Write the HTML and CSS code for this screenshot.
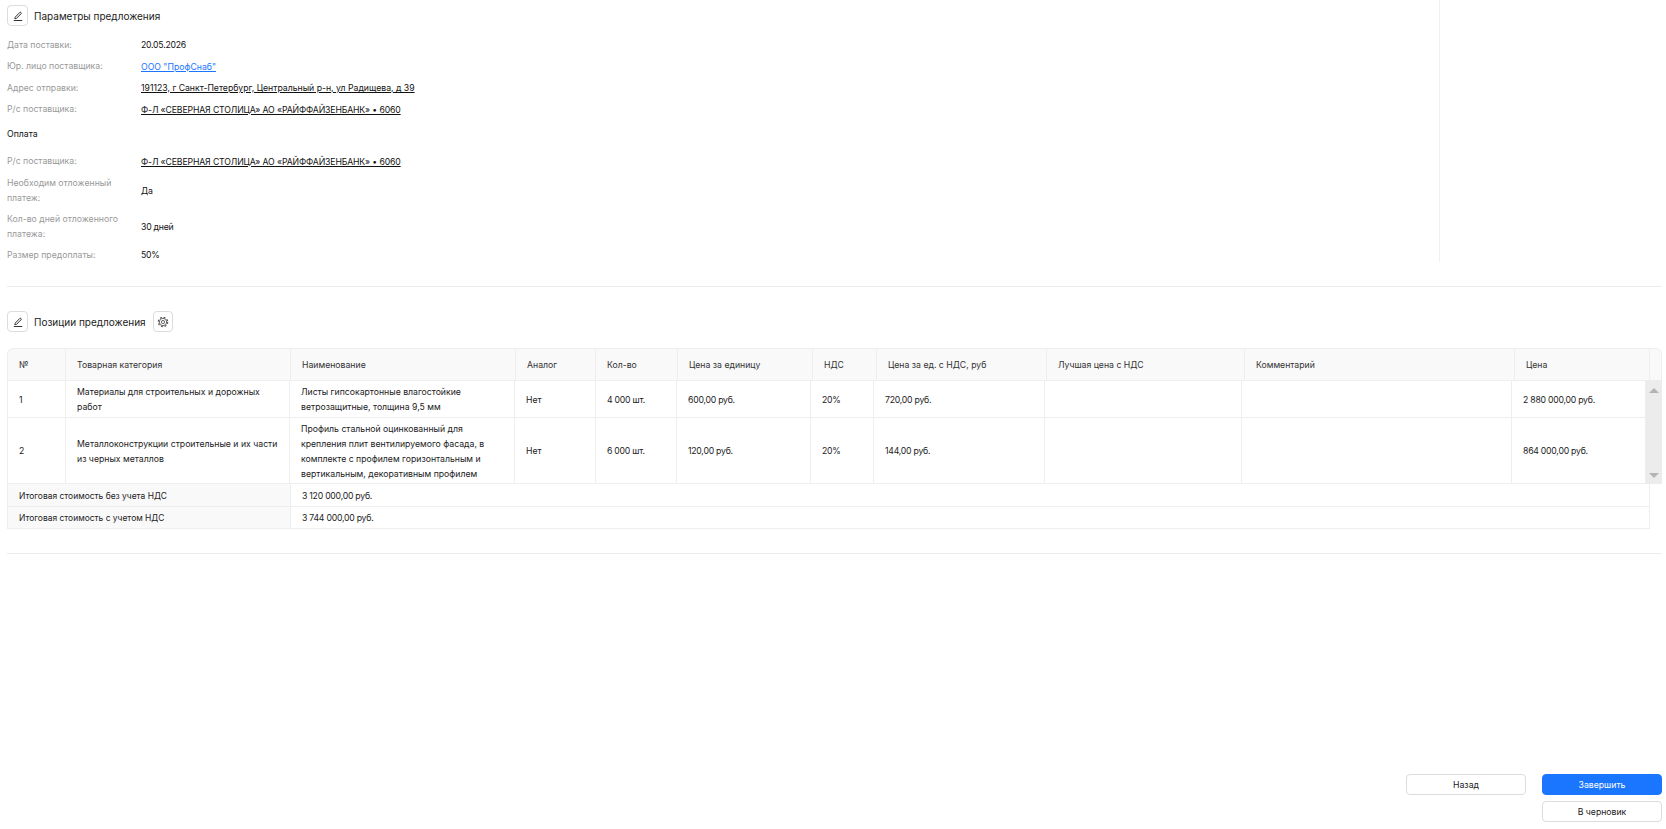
FILE: index.html
```html
<!DOCTYPE html>
<html lang="ru">
<head>
<meta charset="utf-8">
<title>Параметры предложения</title>
<link rel="stylesheet" href="styles.css">
</head>
<body>
<main class="page">
  <section class="params">
    <div class="params-main">
      <header class="section-head">
        <button class="icon-btn" type="button" aria-label="Редактировать">
          <svg class="icon" viewBox="0 0 12 12"><path d="M3.2 7.2 7.7 2.5c.4-.4.9-.4 1.3 0 .4.4.4.9 0 1.3L4.5 8.4l-1.7.3z" /><path d="M1.8 10.5h8.4" /></svg>
        </button>
        <h2 class="section-title">Параметры предложения</h2>
      </header>
      <dl class="fields fields-first">
        <div class="field"><dt>Дата поставки:</dt><dd class="num">20.05.2026</dd></div>
        <div class="field"><dt>Юр. лицо поставщика:</dt><dd><a class="link" href="#">ООО "ПрофСнаб"</a></dd></div>
        <div class="field"><dt>Адрес отправки:</dt><dd><span class="under">191123, г Санкт-Петербург, Центральный р-н, ул Радищева, д 39</span></dd></div>
        <div class="field"><dt>Р/с поставщика:</dt><dd><span class="under caps">Ф-Л «СЕВЕРНАЯ СТОЛИЦА» АО «РАЙФФАЙЗЕНБАНК» • 6060</span></dd></div>
      </dl>
      <h3 class="sub-title">Оплата</h3>
      <dl class="fields">
        <div class="field"><dt>Р/с поставщика:</dt><dd><span class="under caps">Ф-Л «СЕВЕРНАЯ СТОЛИЦА» АО «РАЙФФАЙЗЕНБАНК» • 6060</span></dd></div>
        <div class="field"><dt>Необходим отложенный платеж:</dt><dd>Да</dd></div>
        <div class="field"><dt>Кол-во дней отложенного платежа:</dt><dd class="num">30 дней</dd></div>
        <div class="field"><dt>Размер предоплаты:</dt><dd class="num">50%</dd></div>
      </dl>
    </div>
    <aside class="params-side"></aside>
  </section>

  <hr class="divider">

  <section class="positions">
    <header class="section-head">
      <button class="icon-btn" type="button" aria-label="Редактировать">
        <svg class="icon" viewBox="0 0 12 12"><path d="M3.2 7.2 7.7 2.5c.4-.4.9-.4 1.3 0 .4.4.4.9 0 1.3L4.5 8.4l-1.7.3z" /><path d="M1.8 10.5h8.4" /></svg>
      </button>
      <h2 class="section-title">Позиции предложения</h2>
      <button class="icon-btn icon-btn-narrow" type="button" aria-label="Настройки">
        <svg class="icon" viewBox="0 0 12 12"><circle class="gear-teeth" cx="6" cy="6" r="4.7" /><circle class="gear-ring" cx="6" cy="6" r="3.7" /><circle class="gear-ring" cx="6" cy="6" r="1.6" /></svg>
      </button>
    </header>

    <div class="grid">
      <table class="grid-head">
        <colgroup>
          <col class="h1"><col class="h2"><col class="h3"><col class="h4"><col class="h5"><col class="h6"><col class="h7"><col class="h8"><col class="h9"><col class="h10"><col class="h11"><col class="h12">
        </colgroup>
        <tr>
          <th>№</th><th>Товарная категория</th><th>Наименование</th><th>Аналог</th><th>Кол-во</th><th>Цена за единицу</th><th>НДС</th><th>Цена за ед. с НДС, руб</th><th>Лучшая цена с НДС</th><th>Комментарий</th><th>Цена</th><th></th>
        </tr>
      </table>
      <div class="grid-scroll">
        <table class="grid-body">
          <colgroup>
            <col class="b1"><col class="b2"><col class="b3"><col class="b4"><col class="b5"><col class="b6"><col class="b7"><col class="b8"><col class="b9"><col class="b10"><col class="b11">
          </colgroup>
          <tr class="row-short">
            <td>1</td><td>Материалы для строительных и дорожных работ</td><td>Листы гипсокартонные влагостойкие ветрозащитные, толщина 9,5 мм</td><td>Нет</td><td class="num">4 000 шт.</td><td class="num">600,00 руб.</td><td class="num">20%</td><td class="num">720,00 руб.</td><td></td><td></td><td class="num">2 880 000,00 руб.</td>
          </tr>
          <tr class="row-tall">
            <td>2</td><td>Металлоконструкции строительные и их части из черных металлов</td><td>Профиль стальной оцинкованный для крепления плит вентилируемого фасада, в комплекте с профилем горизонтальным и вертикальным, декоративным профилем</td><td>Нет</td><td class="num">6 000 шт.</td><td class="num">120,00 руб.</td><td class="num">20%</td><td class="num">144,00 руб.</td><td></td><td></td><td class="num">864 000,00 руб.</td>
          </tr>
        </table>
        <div class="scrollbar" aria-hidden="true">
          <span class="arrow arrow-up"></span>
          <span class="arrow arrow-down"></span>
        </div>
      </div>
      <table class="grid-totals">
        <colgroup><col class="t1"><col class="t2"></colgroup>
        <tr class="total-first"><th>Итоговая стоимость без учета НДС</th><td class="num">3 120 000,00 руб.</td></tr>
        <tr><th>Итоговая стоимость с учетом НДС</th><td class="num">3 744 000,00 руб.</td></tr>
      </table>
    </div>
  </section>

  <hr class="divider divider-bottom">

  <footer class="actions">
    <button class="btn" type="button">Назад</button>
    <div class="actions-col">
      <button class="btn btn-primary" type="button">Завершить</button>
      <button class="btn" type="button">В черновик</button>
    </div>
  </footer>
</main>
</body>
</html>
```

FILE: styles.css
```css
* { box-sizing: border-box; }
html, body { margin: 0; padding: 0; background: #fff; }
body {
  font-family: Inter, "Noto Sans", sans-serif;
  font-size: 8.7px;
  color: #222;
}
.page {
  display: flex;
  flex-direction: column;
  height: 829px;
  padding: 0 4px 7px 7px;
  overflow: hidden;
}

/* Section heads */
.section-head { display: flex; align-items: center; height: 21px; }
.section-title { margin: 0 0 0 6px; font-size: 10px; font-weight: 400; color: #222; }
.icon-btn {
  display: flex;
  align-items: center;
  justify-content: center;
  width: 21px;
  height: 21px;
  padding: 0;
  border: 1px solid #dcdcdc;
  border-radius: 4px;
  background: #fff;
}
.icon-btn-narrow { width: 20px; margin-left: 7px; }
.icon { width: 12px; height: 12px; fill: none; stroke: #333; stroke-width: 1; }
.gear-teeth { stroke: #555; stroke-width: 1.2; stroke-dasharray: 1.85; }
.gear-ring { stroke: #555; stroke-width: .9; }

/* Offer parameters */
.params { display: flex; height: 262px; flex: none; }
.params-main { flex: 1; padding-top: 5px; }
.params-side { width: 223px; border-left: 1px solid #f0f0f0; }
.fields { margin: 0; }
.fields-first { margin-top: 8.25px; }
.field { display: flex; align-items: center; min-height: 21.5px; }
.field dt { flex: none; width: 134px; padding: 3px 12px 3px 0; color: #999; line-height: 15px; }
.field dd { margin: 0; color: #111; }
.num { letter-spacing: -.24px; }
.caps { letter-spacing: -.13px; }
.link { color: #1a76ff; text-decoration: underline; }
.under { text-decoration: underline; }
.sub-title { margin: 0; height: 30.75px; line-height: 28px; font-size: 8.7px; font-weight: 400; color: #111; }

/* Dividers */
.divider { flex: none; width: 100%; height: 1px; margin: 24px 0 0; border: 0; background: #ececec; }
.divider-bottom { margin-top: 24px; }

/* Positions grid */
.positions { flex: none; padding-top: 24px; }
.grid { margin-top: 16px; }
table { border-collapse: separate; border-spacing: 0; table-layout: fixed; }
.grid-head { width: 1655px; background: #f9f9f9; border-top: 1px solid #eee; border-radius: 6px 6px 0 0; }
.grid-head th {
  height: 32px;
  padding: 0 0 0 11px;
  border-right: 1px solid #eee;
  border-bottom: 1px solid #eee;
  font-weight: 400;
  text-align: left;
  color: #333;
}
.grid-head th:first-child { border-left: 1px solid #eee; border-top-left-radius: 6px; }
.grid-head th:last-child { border-right: 1px solid #eee; border-top-right-radius: 6px; }
.h1 { width: 59px; } .h2 { width: 225px; } .h3 { width: 225px; } .h4 { width: 80px; } .h5 { width: 82px; } .h6 { width: 135px; } .h7 { width: 64px; } .h8 { width: 170px; } .h9 { width: 198px; } .h10 { width: 270px; } .h11 { width: 135px; } .h12 { width: 12px; }

.grid-scroll { display: flex; }
.grid-body { flex: none; width: 1639px; }
.grid-body td {
  padding: 2px 8px 0 11px;
  border-right: 1px solid #eee;
  border-bottom: 1px solid #eee;
  line-height: 15px;
  color: #222;
}
.grid-body td:first-child { border-left: 1px solid #eee; }
.row-short { height: 37px; }
.row-tall { height: 66px; }
.b1 { width: 59px; } .b2 { width: 224px; } .b3 { width: 225px; } .b4 { width: 81px; } .b5 { width: 81px; } .b6 { width: 134px; } .b7 { width: 63px; } .b8 { width: 171px; } .b9 { width: 197px; } .b10 { width: 270px; } .b11 { width: 134px; }

.scrollbar {
  display: flex;
  flex-direction: column;
  justify-content: space-between;
  align-items: center;
  flex: none;
  width: 16px;
  padding: 7px 0 6px;
  background: #ececec;
}
.arrow { width: 0; height: 0; border-left: 5px solid transparent; border-right: 5px solid transparent; }
.arrow-up { border-bottom: 5px solid #b4b4b4; }
.arrow-down { border-top: 5px solid #b4b4b4; }

.grid-totals { width: 1643px; }
.grid-totals th, .grid-totals td {
  height: 22px;
  padding-top: 2px;
  border-right: 1px solid #eee;
  border-bottom: 1px solid #eee;
  font-weight: 400;
  text-align: left;
  color: #222;
}
.total-first th, .total-first td { height: 23px; }
.grid-totals th { padding-left: 11px; border-left: 1px solid #eee; background: #f9f9f9; font-size: 8.45px; }
.grid-totals td { padding-left: 11px; }
.t1 { width: 284px; } .t2 { width: 1359px; }

/* Footer actions */
.actions { display: flex; justify-content: flex-end; gap: 16px; margin-top: auto; }
.actions-col { display: flex; flex-direction: column; gap: 6px; }
.btn {
  width: 120px;
  height: 21px;
  padding: 0;
  border: 1px solid #dcdcdc;
  border-radius: 4px;
  background: #fff;
  font: 8.7px Inter, "Noto Sans", sans-serif;
  color: #222;
}
.btn-primary { border-color: #1a76ff; background: #1a76ff; color: #fff; }
```
